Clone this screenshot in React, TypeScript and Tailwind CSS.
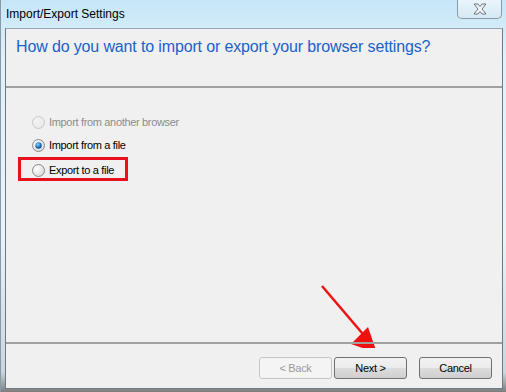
import React from "react";

function Radio({ checked, disabled }: { checked?: boolean; disabled?: boolean }) {
  const id = checked ? "rgc" : disabled ? "rgd" : "rgn";
  return (
    <svg width="13" height="13" viewBox="0 0 13 13" className="shrink-0">
      <defs>
        <radialGradient id={id} cx="0.35" cy="0.35" r="0.8">
          <stop offset="0" stopColor={disabled ? "#f4f4f4" : "#ffffff"} />
          <stop offset="1" stopColor={disabled ? "#e6e6e6" : "#d4d4d4"} />
        </radialGradient>
        <radialGradient id="dot" cx="0.4" cy="0.35" r="0.7">
          <stop offset="0" stopColor="#8fd4ff" />
          <stop offset="0.6" stopColor="#1b77c7" />
          <stop offset="1" stopColor="#0c3f7a" />
        </radialGradient>
      </defs>
      <circle
        cx="6.5"
        cy="6.5"
        r="6"
        fill={`url(#${id})`}
        stroke={disabled ? "#c8c8c8" : "#8a8a8a"}
        strokeWidth="1"
      />
      {checked && <circle cx="6.5" cy="6.5" r="3.2" fill="url(#dot)" />}
    </svg>
  );
}

function Btn({ label, disabled }: { label: string; disabled?: boolean }) {
  return (
    <div
      className={
        "w-[73px] h-[22px] rounded-[3px] border flex items-center justify-center text-[11px] tracking-[-0.3px] " +
        (disabled
          ? "border-[#c5c5c5] bg-[#f4f4f4] text-[#9a9a9a]"
          : "border-[#707070] bg-[linear-gradient(#f2f2f2_0%,#ebebeb_50%,#dddddd_51%,#cfcfcf_100%)] text-black")
      }
    >
      {label}
    </div>
  );
}

export default function App() {
  return (
    <div
      className="relative w-[506px] h-[392px] overflow-hidden bg-[linear-gradient(180deg,#c6e6f8_0%,#dff1fb_15%,#e9f4f9_60%,#c9d6dc_95%,#7d7d7d_100%)] border-l border-[#8a99a6]"
      style={{ fontFamily: '"Liberation Sans", Arial, sans-serif' }}
    >
      {/* title bar */}
      <div className="h-[28px] flex items-start relative">
        <div className="pl-[5px] pt-[6px] text-[12px] text-black leading-[16px]">Import/Export Settings</div>
        <div className="absolute right-[4px] top-0 w-[45px] h-[19px] rounded-b-[5px] border border-t-0 border-[#8d9aa3] bg-[linear-gradient(#eaf5fb,#d6e9f4)] flex items-center justify-center">
          <svg width="16" height="12" viewBox="0 0 16 12">
            <path
              d="M2 1 L6 1 L8 3.5 L10 1 L14 1 L10 6 L14 11 L10 11 L8 8.5 L6 11 L2 11 L6 6 Z"
              fill="#f2f4f6"
              stroke="#6d7780"
              strokeWidth="1"
              strokeLinejoin="round"
            />
          </svg>
        </div>
      </div>

      {/* client area */}
      <div className="ml-[4px] mr-[3px] h-[361px] border border-[#6d7a84] border-t-[#9aa5ad] bg-[#f0f0f0] flex flex-col">
        <div className="h-[59px] border-b-2 border-[#a0a0a0] pl-[10px] pt-[8px]">
          <div className="text-[16px] text-[#1a62c9] leading-[20px] tracking-[-0.14px]">
            How do you want to import or export your browser settings?
          </div>
        </div>

        <div className="h-[254px] relative">
          <div className="pl-[26px] pt-[28px] flex flex-col text-[11px] tracking-[-0.33px]">
            <div className="flex items-center gap-[4px] h-[13px] text-[#8d8d8d]">
              <Radio disabled />
              <span>Import from another browser</span>
            </div>
            <div className="flex items-center gap-[4px] h-[13px] mt-[10px] text-black">
              <Radio checked />
              <span>Import from a file</span>
            </div>
            <div className="relative flex items-center gap-[4px] h-[13px] mt-[12px] text-black">
              <Radio />
              <span>Export to a file</span>
              <div className="absolute left-[-14px] top-[-7px] w-[110px] h-[24px] border-[3px] border-[#e8101c]" />
            </div>
          </div>
          {/* arrow */}
          <svg className="absolute left-0 top-0" width="497" height="260" viewBox="0 0 497 260">
            <line x1="316" y1="198" x2="362" y2="252" stroke="#f01010" strokeWidth="2.5" />
            <polygon points="371,265 345,256 362,239" fill="#f01010" />
          </svg>
        </div>

        <div className="flex-1 border-t-2 border-[#a0a0a0] flex justify-end items-start pt-[13px] pr-[10px] relative">
          <div className="flex gap-[2px]">
            <Btn label="< Back" disabled />
            <Btn label="Next >" />
          </div>
          <div className="ml-[12px]">
            <Btn label="Cancel" />
          </div>
        </div>
      </div>
    </div>
  );
}
